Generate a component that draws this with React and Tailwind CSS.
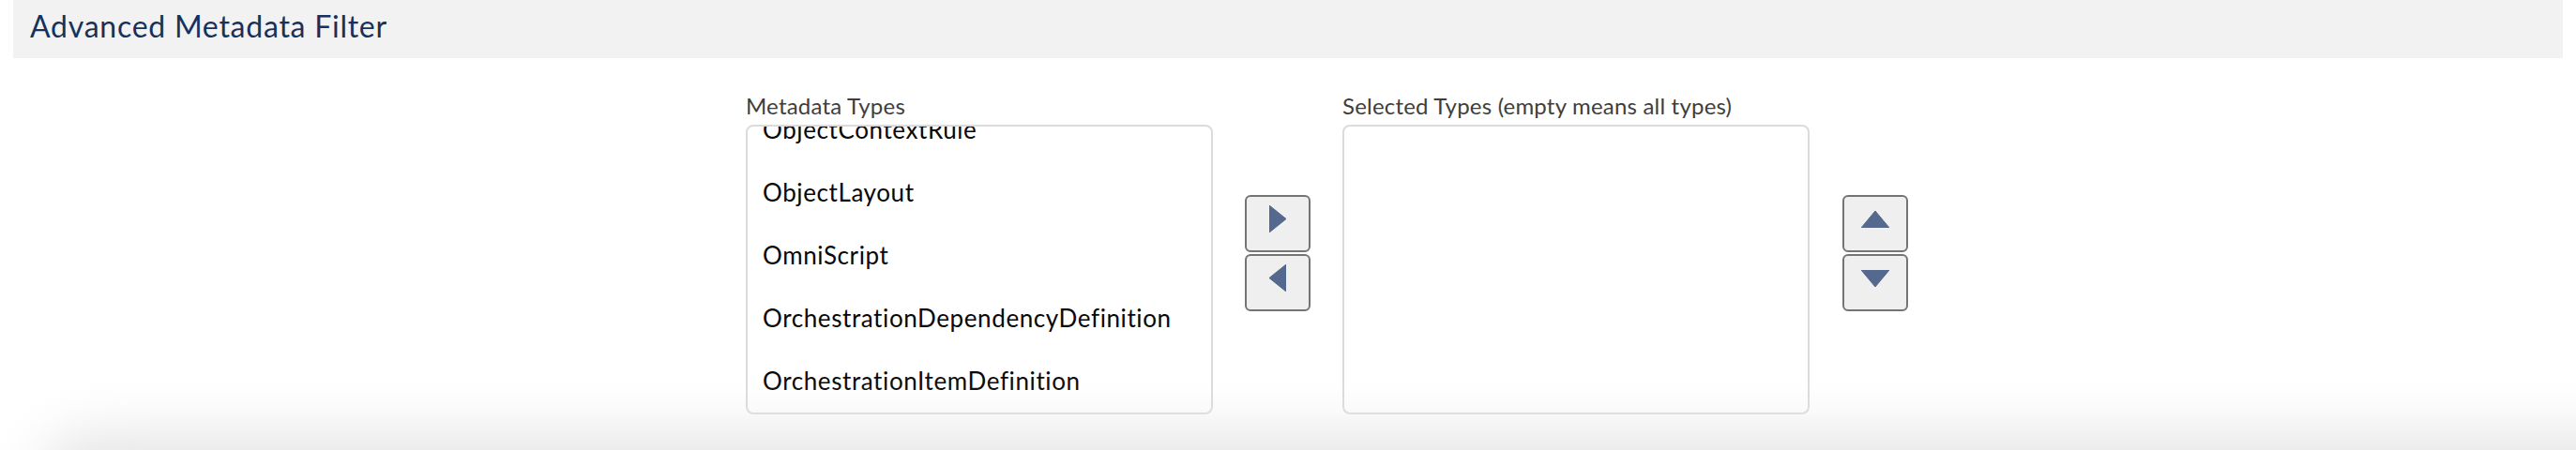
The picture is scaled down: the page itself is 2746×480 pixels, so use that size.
import { useState } from "react";

const metadataTypes = [
  "ObjectContextRule",
  "ObjectLayout",
  "OmniScript",
  "OrchestrationDependencyDefinition",
  "OrchestrationItemDefinition",
  "OrchestrationStepDefinition",
];

function Arrow({ dir }) {
  const shapes = {
    right: { w: 18, h: 29, points: "0,0 18,14.5 0,29" },
    left: { w: 18, h: 29, points: "18,0 0,14.5 18,29" },
    up: { w: 30, h: 18, points: "0,18 15,0 30,18" },
    down: { w: 30, h: 18, points: "0,0 30,0 15,18" },
  };
  const s = shapes[dir];
  return (
    <svg width={s.w} height={s.h} viewBox={`0 0 ${s.w} ${s.h}`} className="-translate-y-[5px]">
      <polygon points={s.points} fill="#54698d" strokeLinejoin="round" stroke="#54698d" strokeWidth="1" />
    </svg>
  );
}

function MoveButton({ dir, title }) {
  return (
    <button
      type="button"
      title={title}
      className="flex h-[61px] w-[70px] items-center justify-center rounded-[6px] border-2 border-[#747474] bg-[#efefef]"
    >
      <Arrow dir={dir} />
    </button>
  );
}

function ButtonPair({ first, second }) {
  return (
    <div className="flex flex-col gap-[2px]">
      <MoveButton dir={first} title={first} />
      <MoveButton dir={second} title={second} />
    </div>
  );
}

function ListColumn({ label, items, selected, onSelect }) {
  return (
    <div className="flex w-[498px] flex-col">
      <span className="mb-[6px] text-[24px] leading-[29px] tracking-[0.2px] text-[#3e3e3c]">{label}</span>
      <div className="h-[309px] overflow-hidden rounded-[8px] border-2 border-[#dddbda] bg-white">
        <ul className="-mt-[30px]">
          {items.map((item) => (
            <li
              key={item}
              onClick={() => onSelect(item)}
              className={`h-[67px] cursor-pointer px-[16px] text-[26px] leading-[67px] tracking-[0.6px] text-[#080707] ${
                selected === item ? "bg-[#f3f2f2]" : ""
              }`}
            >
              {item}
            </li>
          ))}
        </ul>
      </div>
    </div>
  );
}

export default function App() {
  const [selected, setSelected] = useState(null);

  return (
    <div
      className="relative h-[480px] overflow-hidden bg-white"
      style={{ fontFamily: "Lato, 'Noto Sans', sans-serif" }}
    >
      <div className="mx-[14px] h-[62px] bg-[#f2f2f2] px-[18px] pt-[9px]">
        <h1 className="text-[32px] leading-[38px] tracking-[0.75px] text-[#16325c]">Advanced Metadata Filter</h1>
      </div>

      <div className="flex items-center pl-[795px] pt-[36px]">
        <ListColumn
          label="Metadata Types"
          items={metadataTypes}
          selected={selected}
          onSelect={setSelected}
        />
        <div className="px-[34px]">
          <ButtonPair first="right" second="left" />
        </div>
        <ListColumn
          label="Selected Types (empty means all types)"
          items={[]}
          selected={selected}
          onSelect={setSelected}
        />
        <div className="pl-[35px]">
          <ButtonPair first="up" second="down" />
        </div>
      </div>

      {/* soft shade along the bottom edge */}
      <div className="pointer-events-none absolute left-[40px] right-[-200px] top-[460px] h-[200px] rounded-[60px] bg-[#e6e6e6] blur-[28px]" />
    </div>
  );
}
